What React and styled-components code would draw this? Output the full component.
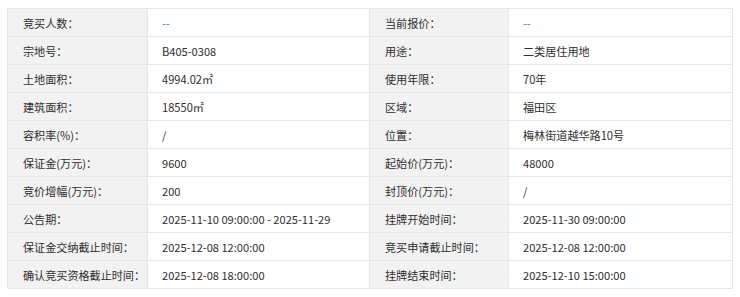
import React from "react";
import styled, { createGlobalStyle } from "styled-components";

const GlobalStyle = createGlobalStyle`
  body {
    margin: 0;
    padding: 8px 8px 0 7px;
    background: #ffffff;
    font-family: "Noto Sans CJK SC", "Noto Sans", sans-serif;
  }
`;

const InfoTable = styled.table`
  width: 725px;
  border-collapse: collapse;
  table-layout: fixed;
  font-size: 11.1px;
  color: #333333;
`;

const Col = styled.col`
  width: ${(p) => p.$w}px;
`;

const Row = styled.tr`
  height: 28px;
`;

const Label = styled.td`
  background: #f2f2f2;
  border: 1px solid #e6e6e6;
  padding: 0 0 0 15px;
  white-space: nowrap;
  color: #2e2e2e;
`;

const Value = styled.td`
  background: #ffffff;
  border: 1px solid #e6e6e6;
  padding: 0 0 0 14px;
  white-space: nowrap;
  color: ${(p) => (p.$empty ? "#3a7ee6" : "#2e2e2e")};
`;

const rows = [
  ["竞买人数：", "--", "当前报价：", "--"],
  ["宗地号：", "B405-0308", "用途：", "二类居住用地"],
  ["土地面积：", "4994.02㎡", "使用年限：", "70年"],
  ["建筑面积：", "18550㎡", "区域：", "福田区"],
  ["容积率(%)：", "/", "位置：", "梅林街道越华路10号"],
  ["保证金(万元)：", "9600", "起始价(万元)：", "48000"],
  ["竞价增幅(万元)：", "200", "封顶价(万元)：", "/"],
  ["公告期：", "2025-11-10 09:00:00 - 2025-11-29", "挂牌开始时间：", "2025-11-30 09:00:00"],
  ["保证金交纳截止时间：", "2025-12-08 12:00:00", "竞买申请截止时间：", "2025-12-08 12:00:00"],
  ["确认竞买资格截止时间：", "2025-12-08 18:00:00", "挂牌结束时间：", "2025-12-10 15:00:00"],
];

const App = () => (
  <>
    <GlobalStyle />
    <InfoTable>
      <colgroup>
        <Col $w={140} />
        <Col $w={222} />
        <Col $w={139} />
        <Col $w={224} />
      </colgroup>
      <tbody>
        {rows.map(([l1, v1, l2, v2], i) => (
          <Row key={i}>
            <Label>{l1}</Label>
            <Value $empty={v1 === "--"}>{v1}</Value>
            <Label>{l2}</Label>
            <Value $empty={v2 === "--"}>{v2}</Value>
          </Row>
        ))}
      </tbody>
    </InfoTable>
  </>
);

export default App;
